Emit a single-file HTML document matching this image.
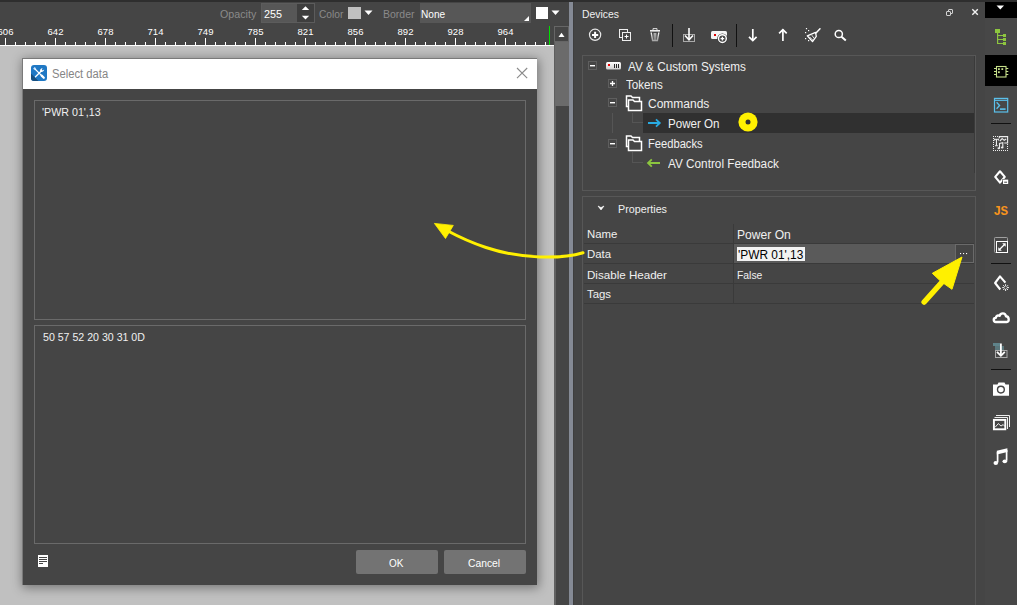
<!DOCTYPE html>
<html><head><meta charset="utf-8">
<style>
*{margin:0;padding:0;box-sizing:border-box}
html,body{width:1017px;height:605px;overflow:hidden;background:#454545;font-family:"Liberation Sans",sans-serif;color:#e8e8e8}
.a{position:absolute}
.t{position:absolute;white-space:pre;line-height:1}
</style></head><body>
<!-- top dark line -->
<div class="a" style="left:0;top:0;width:1017px;height:2px;background:#2e2e2e"></div>

<!-- ===== TOOLBAR ===== -->
<div class="t" style="left:220px;top:9px;font-size:10.7px;color:#8a8a8a">Opacity</div>
<div class="a" style="left:261px;top:3px;width:54px;height:20px;background:#3e3e3e;border:1px solid #5c5c5c"></div>
<div class="a" style="left:262px;top:4px;width:35px;height:18px;background:#575757"></div>
<div class="t" style="left:264px;top:9px;font-size:10.8px;color:#fff">255</div>
<svg class="a" style="left:300px;top:5px" width="12" height="16"><path d="M1.8 5 L5.5 1.2 L9.2 5Z M1.8 10.8 L5.5 14.6 L9.2 10.8Z" fill="#fff"/></svg>
<div class="t" style="left:319px;top:10px;font-size:10.2px;color:#8a8a8a">Color</div>
<div class="a" style="left:348px;top:7px;width:13px;height:12px;background:#c0c0c0"></div>
<svg class="a" style="left:364px;top:10px" width="10" height="6"><path d="M0.5 0.5 L8.5 0.5 L4.5 5Z" fill="#fff"/></svg>
<div class="t" style="left:383px;top:9px;font-size:10.5px;color:#8a8a8a">Border</div>
<div class="a" style="left:420px;top:3px;width:111px;height:20px;background:#575757"></div>
<svg class="a" style="left:523px;top:16px" width="7" height="6"><path d="M6 0 L6 5 L1 5Z" fill="#fff"/></svg>
<div class="t" style="left:421px;top:10px;font-size:10.1px;color:#fff">None</div>
<div class="a" style="left:536px;top:7px;width:12px;height:12px;background:#fff"></div>
<svg class="a" style="left:551px;top:10px" width="10" height="6"><path d="M0.5 0.5 L8.5 0.5 L4.5 5Z" fill="#fff"/></svg>

<!-- ===== RULER ===== -->
<div id="ruler" class="a" style="left:0;top:26px;width:554px;height:20px;background:#454545"></div>
<svg class="a" style="left:0;top:26px" width="554" height="20"><rect x="5" y="12" width="1" height="7" fill="#fff"/><rect x="15" y="16" width="1" height="3" fill="#fff"/><rect x="25" y="16" width="1" height="3" fill="#fff"/><rect x="35" y="16" width="1" height="3" fill="#fff"/><rect x="45" y="16" width="1" height="3" fill="#fff"/><rect x="55" y="12" width="1" height="7" fill="#fff"/><rect x="65" y="16" width="1" height="3" fill="#fff"/><rect x="75" y="16" width="1" height="3" fill="#fff"/><rect x="85" y="16" width="1" height="3" fill="#fff"/><rect x="95" y="16" width="1" height="3" fill="#fff"/><rect x="105" y="12" width="1" height="7" fill="#fff"/><rect x="115" y="16" width="1" height="3" fill="#fff"/><rect x="125" y="16" width="1" height="3" fill="#fff"/><rect x="135" y="16" width="1" height="3" fill="#fff"/><rect x="145" y="16" width="1" height="3" fill="#fff"/><rect x="155" y="12" width="1" height="7" fill="#fff"/><rect x="165" y="16" width="1" height="3" fill="#fff"/><rect x="175" y="16" width="1" height="3" fill="#fff"/><rect x="185" y="16" width="1" height="3" fill="#fff"/><rect x="195" y="16" width="1" height="3" fill="#fff"/><rect x="205" y="12" width="1" height="7" fill="#fff"/><rect x="215" y="16" width="1" height="3" fill="#fff"/><rect x="225" y="16" width="1" height="3" fill="#fff"/><rect x="235" y="16" width="1" height="3" fill="#fff"/><rect x="245" y="16" width="1" height="3" fill="#fff"/><rect x="255" y="12" width="1" height="7" fill="#fff"/><rect x="265" y="16" width="1" height="3" fill="#fff"/><rect x="275" y="16" width="1" height="3" fill="#fff"/><rect x="285" y="16" width="1" height="3" fill="#fff"/><rect x="295" y="16" width="1" height="3" fill="#fff"/><rect x="305" y="12" width="1" height="7" fill="#fff"/><rect x="315" y="16" width="1" height="3" fill="#fff"/><rect x="325" y="16" width="1" height="3" fill="#fff"/><rect x="335" y="16" width="1" height="3" fill="#fff"/><rect x="345" y="16" width="1" height="3" fill="#fff"/><rect x="355" y="12" width="1" height="7" fill="#fff"/><rect x="365" y="16" width="1" height="3" fill="#fff"/><rect x="375" y="16" width="1" height="3" fill="#fff"/><rect x="385" y="16" width="1" height="3" fill="#fff"/><rect x="395" y="16" width="1" height="3" fill="#fff"/><rect x="405" y="12" width="1" height="7" fill="#fff"/><rect x="415" y="16" width="1" height="3" fill="#fff"/><rect x="425" y="16" width="1" height="3" fill="#fff"/><rect x="435" y="16" width="1" height="3" fill="#fff"/><rect x="445" y="16" width="1" height="3" fill="#fff"/><rect x="455" y="12" width="1" height="7" fill="#fff"/><rect x="465" y="16" width="1" height="3" fill="#fff"/><rect x="475" y="16" width="1" height="3" fill="#fff"/><rect x="485" y="16" width="1" height="3" fill="#fff"/><rect x="495" y="16" width="1" height="3" fill="#fff"/><rect x="505" y="12" width="1" height="7" fill="#fff"/><rect x="515" y="16" width="1" height="3" fill="#fff"/><rect x="525" y="16" width="1" height="3" fill="#fff"/><rect x="535" y="16" width="1" height="3" fill="#fff"/><rect x="545" y="16" width="1" height="3" fill="#fff"/><g font-family="Liberation Sans" font-size="9.5" fill="#fff"><text x="5.5" y="9" text-anchor="middle">606</text><text x="55.5" y="9" text-anchor="middle">642</text><text x="105.5" y="9" text-anchor="middle">678</text><text x="155.5" y="9" text-anchor="middle">714</text><text x="205.5" y="9" text-anchor="middle">749</text><text x="255.5" y="9" text-anchor="middle">785</text><text x="305.5" y="9" text-anchor="middle">821</text><text x="355.5" y="9" text-anchor="middle">856</text><text x="405.5" y="9" text-anchor="middle">892</text><text x="455.5" y="9" text-anchor="middle">928</text><text x="505.5" y="9" text-anchor="middle">964</text></g></svg>
<div class="a" style="left:0;top:45px;width:554px;height:1px;background:#fff"></div>
<div class="a" style="left:549px;top:26px;width:1px;height:19px;background:#00e000"></div>

<!-- ===== CANVAS ===== -->
<div class="a" style="left:0;top:46px;width:554px;height:559px;background:#c0c0c0;overflow:hidden">
  <div class="a" style="left:22px;top:12px;width:515px;height:527px;box-shadow:1px 2px 10px 1px rgba(0,0,0,0.38)"></div>
</div>

<!-- ===== DIALOG ===== -->
<div class="a" style="left:22px;top:58px;width:515px;height:527px;background:#454545;border:1px solid #7a7a7a;border-bottom:none;border-right:none"></div>
<div class="a" style="left:23px;top:59px;width:514px;height:30px;background:#fff"></div>
<svg class="a" style="left:31px;top:65px" width="16" height="16" viewBox="0 0 16 16">
  <defs><clipPath id="ic"><rect x="0" y="0" width="16" height="16" rx="3"/></clipPath></defs>
  <g clip-path="url(#ic)">
  <rect x="0" y="0" width="16" height="16" fill="#1f78c4"/>
  <path d="M0 8.5 L7.5 16 L0 16Z" fill="#174f80"/>
  </g>
  <path d="M4 4 L11.5 11.5" stroke="#fff" stroke-width="1.1"/>
  <path d="M3 2.8 L4.2 4.2" stroke="#cfe6ff" stroke-width="2.2"/>
  <path d="M10.6 10.6 L12.8 12.8" stroke="#fff" stroke-width="2.2" stroke-linecap="round"/>
  <path d="M4.5 11.8 L10 6.3" stroke="#fff" stroke-width="1.3" stroke-linecap="round"/>
  <path d="M9.3 6.8 C8.6 5.2 9.6 3.2 11.6 3 L10.8 4.6 L11.6 5.4 L13.2 4.6 C13 6.6 11 7.5 9.3 6.8Z" fill="#fff"/>
</svg>
<div class="t" style="left:52px;top:68px;font-size:12px;color:#858585;transform:scaleX(0.935);transform-origin:0 0">Select data</div>
<svg class="a" style="left:516px;top:67px" width="12" height="12"><path d="M1 1 L11.2 11.2 M11.2 1 L1 11.2" stroke="#8a8a8a" stroke-width="1.1"/></svg>

<div class="a" style="left:34px;top:100px;width:492px;height:220px;border:1px solid #6a6a6a"></div>
<div class="t" style="left:42px;top:107px;font-size:10.7px;color:#f0f0f0">'PWR 01',13</div>
<div class="a" style="left:34px;top:325px;width:492px;height:219px;border:1px solid #6a6a6a"></div>
<div class="t" style="left:43px;top:332px;font-size:10.6px;color:#f0f0f0">50 57 52 20 30 31 0D</div>

<svg class="a" style="left:38px;top:555px" width="10" height="12"><rect x="0" y="0" width="10" height="12" fill="#fff"/><rect x="1" y="2" width="8" height="1" fill="#454545"/><rect x="1" y="4" width="8" height="1" fill="#454545"/><rect x="1" y="6" width="8" height="1" fill="#454545"/><rect x="1" y="8" width="4" height="1" fill="#454545"/></svg>
<div class="a" style="left:356px;top:550px;width:82px;height:24px;background:#737373;border-radius:2px"></div>
<div class="t" style="left:389px;top:559px;font-size:10px;color:#fff">OK</div>
<div class="a" style="left:444px;top:550px;width:82px;height:24px;background:#737373;border-radius:2px"></div>
<div class="t" style="left:468px;top:559px;font-size:10.3px;color:#fff">Cancel</div>

<!-- ===== SCROLLBAR ===== -->
<div class="a" style="left:554px;top:26px;width:15px;height:579px;background:#454545;border-left:2px solid #616161"></div>
<div class="a" style="left:554px;top:26px;width:15px;height:16px;border:1px solid #666;background:#454545"></div>
<svg class="a" style="left:558px;top:32px" width="8" height="6"><path d="M0.5 5 L3.5 0.8 L6.5 5Z" fill="#fff"/></svg>
<div class="a" style="left:554px;top:42px;width:15px;height:64px;background:#6b6b6b;border-left:1px solid #5e5e5e"></div>
<!-- splitter -->
<div class="a" style="left:569px;top:2px;width:4px;height:603px;background:#858a95"></div>
<div class="a" style="left:573px;top:2px;width:1px;height:603px;background:#3e3e3e"></div>

<!-- ===== DEVICES PANEL ===== -->
<div class="t" style="left:582px;top:9px;font-size:10.6px;color:#f0f0f0;transform:scaleX(0.98);transform-origin:0 0">Devices</div>
<svg class="a" style="left:946px;top:9px" width="7" height="7" viewBox="0 0 7 7"><rect x="2.5" y="0.5" width="4" height="4" rx="0.5" fill="none" stroke="#d0d0d0" stroke-width="1"/><rect x="0.5" y="2.5" width="4" height="4" rx="0.5" fill="#454545" stroke="#d0d0d0" stroke-width="1"/></svg>
<svg class="a" style="left:971px;top:8px" width="8" height="8" viewBox="0 0 8 8"><path d="M1.3 1.3 L6.8 6.8 M6.8 1.3 L1.3 6.8" stroke="#f2f2f2" stroke-width="1.4"/></svg>

<!-- toolbar -->
<svg class="a" style="left:580px;top:22px" width="280" height="28" viewBox="580 22 280 28">
  <circle cx="595.1" cy="34.8" r="5.6" fill="none" stroke="#e8e8e8" stroke-width="1.2"/>
  <path d="M592 34.9 H598.2 M595.1 31.8 V38" stroke="#fff" stroke-width="2"/>
  <rect x="619.5" y="29.5" width="8" height="8" fill="none" stroke="#eee" stroke-width="1"/>
  <rect x="622.5" y="32.5" width="8" height="8" fill="#454545" stroke="#eee" stroke-width="1"/>
  <path d="M624.5 36.5 H628.5 M626.5 34.5 V38.5" stroke="#fff" stroke-width="1"/>
  <defs><linearGradient id="tg" gradientUnits="userSpaceOnUse" x1="0" y1="32" x2="0" y2="41"><stop offset="0" stop-color="#fff"/><stop offset="1" stop-color="#999"/></linearGradient></defs>
  <path d="M653 30 V28.6 H657 V30" fill="none" stroke="#ddd" stroke-width="1"/>
  <rect x="650" y="30" width="10" height="1.6" fill="#eee"/>
  <path d="M651.2 32.5 L652.6 40.5 H657.4 L658.8 32.5" fill="none" stroke="url(#tg)" stroke-width="1.4"/>
  <path d="M654.2 33 V40 M655.8 33 V40" stroke="url(#tg)" stroke-width="0.9"/>
  <path d="M652.3 40.6 H657.7" stroke="#aaa" stroke-width="1"/>
  <rect x="672" y="24" width="1" height="23" fill="#111"/>
  <rect x="683.5" y="34.5" width="11" height="7" fill="none" stroke="#aaa" stroke-width="1"/>
  <path d="M689 28 V39.5" stroke="#fff" stroke-width="1.6"/>
  <path d="M685 35.5 L689 39.8 L693 35.5" fill="none" stroke="#fff" stroke-width="1.6"/>
  <rect x="711" y="31" width="16" height="8" rx="1.5" fill="#f4f4f4"/>
  <rect x="714" y="34" width="2" height="2" fill="#d00"/>
  <circle cx="722.4" cy="38.6" r="5.2" fill="#3a3a3a"/><circle cx="722.4" cy="38.6" r="3.9" fill="#454545" stroke="#fff" stroke-width="1.4"/>
  <path d="M720.6 38.6 H724.2 M722.4 36.8 V40.4" stroke="#fff" stroke-width="1.3"/>
  <rect x="736" y="24" width="1" height="23" fill="#111"/>
  <path d="M752.8 29 V40.5" stroke="#fff" stroke-width="1.7"/>
  <path d="M749 36.8 L752.8 40.6 L756.6 36.8" fill="none" stroke="#fff" stroke-width="1.7"/>
  <path d="M782.9 29.6 V41" stroke="#fff" stroke-width="1.7"/>
  <path d="M779.1 33.4 L782.9 29.6 L786.7 33.4" fill="none" stroke="#fff" stroke-width="1.7"/>
  <path d="M820 28.8 L816 33" stroke="#fff" stroke-width="1.5" stroke-linecap="round"/>
  <path d="M815.5 32.4 L807.3 35.8 L812.5 41.6 L816.3 36.3Z" fill="none" stroke="#fff" stroke-width="1.3" stroke-linejoin="round"/>
  <path d="M809.5 36.8 L813 40.3 M811.8 35.2 L814.3 38.6" stroke="#fff" stroke-width="0.8"/>
  <rect x="805.9" y="28" width="1.2" height="1.2" fill="#fff"/><rect x="808" y="30" width="1.2" height="1.2" fill="#fff"/><rect x="805" y="32" width="1.2" height="1.2" fill="#fff"/><rect x="805" y="38" width="1.2" height="1.2" fill="#fff"/><rect x="808" y="40" width="1.2" height="1.2" fill="#fff"/>
  <circle cx="838.8" cy="34" r="3.6" fill="none" stroke="#fff" stroke-width="1.5"/>
  <path d="M841.5 36.8 L845.8 40.5" stroke="#fff" stroke-width="2"/>
</svg>

<!-- tree box -->
<div class="a" style="left:582px;top:55px;width:394px;height:136px;border:1px solid #575757"></div>
<div class="a" style="left:643px;top:113px;width:331px;height:20px;background:#303030"></div>
<div class="a" style="left:974px;top:56px;width:1px;height:117px;background:#3a3a3a"></div>
<svg class="a" style="left:583px;top:56px" width="100" height="130" viewBox="583 56 100 130">
  <rect x="588.5" y="61.5" width="8" height="8" fill="none" stroke="#5e5e5e"/>
  <rect x="590" y="65" width="5" height="1.4" fill="#fff"/>
  <rect x="608.5" y="79.5" width="8" height="8" fill="none" stroke="#5e5e5e"/>
  <path d="M610 83.5 H615 M612.5 81 V86" stroke="#fff" stroke-width="1.3"/>
  <rect x="608.5" y="98.5" width="8" height="8" fill="none" stroke="#5e5e5e"/>
  <rect x="610" y="102" width="5" height="1.4" fill="#fff"/>
  <rect x="608.5" y="139.5" width="8" height="8" fill="none" stroke="#5e5e5e"/>
  <rect x="610" y="143" width="5" height="1.4" fill="#fff"/>
  <defs><linearGradient id="dg" x1="0" y1="0" x2="0" y2="1"><stop offset="0" stop-color="#fff"/><stop offset="1" stop-color="#cfcfcf"/></linearGradient></defs>
  <rect x="606" y="62" width="15" height="7.5" rx="1.5" fill="url(#dg)"/>
  <rect x="608" y="64" width="2" height="2" fill="#e00"/>
  <path d="M614.5 64 V68 M616.5 64 V68 M618.5 64 V68" stroke="#111" stroke-width="0.9"/>
  <!-- folders -->
  <g id="fold1" fill="#454545" stroke="#fff" stroke-width="1.5">
    <path d="M626.5 96 H631 L632.5 97.5 H639.5 V106.5 H626.5Z"/>
    <path d="M628.5 100 H633 L634.5 101.5 H641.5 V110.5 H628.5Z"/>
  </g>
  <g fill="#454545" stroke="#fff" stroke-width="1.5">
    <path d="M626.5 136 H631 L632.5 137.5 H639.5 V146.5 H626.5Z"/>
    <path d="M628.5 140 H633 L634.5 141.5 H641.5 V150.5 H628.5Z"/>
  </g>
  <!-- tree lines -->
  <rect x="612" y="113" width="1" height="20" fill="#555"/>
  <rect x="632" y="113" width="1" height="10" fill="#555"/>
  <rect x="632" y="122" width="11" height="1" fill="#555"/>
  <rect x="632" y="152" width="1" height="11" fill="#555"/>
  <rect x="632" y="162" width="11" height="1" fill="#555"/>
  <!-- arrows -->
  <path d="M648 123 H659" stroke="#29abe2" stroke-width="2"/>
  <path d="M656 119.3 L659.8 123 L656 126.7" fill="none" stroke="#29abe2" stroke-width="1.8"/>
  <path d="M648.5 163 H660" stroke="#8cc63f" stroke-width="2"/>
  <path d="M651.8 159.3 L648 163 L651.8 166.7" fill="none" stroke="#8cc63f" stroke-width="1.8"/>
</svg>
<div class="t" style="left:628px;top:61px;font-size:12px;color:#f0f0f0;transform:scaleX(0.979);transform-origin:0 0">AV &amp; Custom Systems</div>
<div class="t" style="left:626px;top:79px;font-size:12px;color:#f0f0f0;transform:scaleX(0.97);transform-origin:0 0">Tokens</div>
<div class="t" style="left:648px;top:98px;font-size:12px;color:#f0f0f0">Commands</div>
<div class="t" style="left:668px;top:118px;font-size:12px;color:#f0f0f0;transform:scaleX(0.966);transform-origin:0 0">Power On</div>
<div class="t" style="left:648px;top:138px;font-size:12px;color:#f0f0f0;transform:scaleX(0.93);transform-origin:0 0">Feedbacks</div>
<div class="t" style="left:668px;top:158px;font-size:12px;color:#f0f0f0;transform:scaleX(0.98);transform-origin:0 0">AV Control Feedback</div>
<!-- yellow cursor circle -->
<svg class="a" style="left:737px;top:111px" width="22" height="22"><circle cx="11" cy="11" r="9.6" fill="#fff000"/><circle cx="11" cy="11" r="2.5" fill="#303030"/></svg>

<!-- properties box -->
<div class="a" style="left:582px;top:196px;width:394px;height:420px;border:1px solid #575757"></div>
<svg class="a" style="left:597px;top:205px" width="8" height="6"><path d="M1 1 L4 5 L7 1 L4 2.6Z" fill="#fff" stroke="#fff" stroke-width="0.6" stroke-linejoin="round"/></svg>
<div class="t" style="left:618px;top:204px;font-size:10.75px;color:#f0f0f0">Properties</div>
<div class="a" style="left:733px;top:224px;width:1px;height:80px;background:#3a3a3a"></div>
<div class="a" style="left:584px;top:243px;width:390px;height:1px;background:#3a3a3a"></div>
<div class="a" style="left:584px;top:263px;width:390px;height:1px;background:#3a3a3a"></div>
<div class="a" style="left:584px;top:283px;width:390px;height:1px;background:#3a3a3a"></div>
<div class="a" style="left:584px;top:303px;width:390px;height:1px;background:#3a3a3a"></div>
<div class="a" style="left:734px;top:244px;width:240px;height:19px;background:#5a5a5a"></div>
<div class="a" style="left:737px;top:247px;width:68px;height:14px;background:#f2f2f2"></div>
<div class="a" style="left:955px;top:244px;width:19px;height:19px;background:#454545;border:1px solid #6a6a6a"></div>
<svg class="a" style="left:958px;top:252px" width="12" height="3"><rect x="2" y="1" width="1.1" height="1.1" fill="#fff"/><rect x="5" y="1" width="1.1" height="1.1" fill="#fff"/><rect x="8" y="1" width="1.1" height="1.1" fill="#fff"/></svg>
<div class="t" style="left:587px;top:229px;font-size:11.4px;color:#f0f0f0">Name</div>
<div class="t" style="left:587px;top:249px;font-size:11.4px;color:#f0f0f0">Data</div>
<div class="t" style="left:587px;top:269px;font-size:11.6px;color:#f0f0f0">Disable Header</div>
<div class="t" style="left:587px;top:289px;font-size:11.4px;color:#f0f0f0">Tags</div>
<div class="t" style="left:737px;top:229px;font-size:12.1px;color:#f0f0f0">Power On</div>
<div class="t" style="left:738px;top:249px;font-size:12px;color:#000;transform:scaleX(0.99);transform-origin:0 0">'PWR 01',13</div>
<div class="t" style="left:737px;top:270px;font-size:11.5px;color:#f0f0f0;transform:scaleX(0.9);transform-origin:0 0">False</div>

<!-- ===== RIGHT SIDEBAR ===== -->
<div class="a" style="left:985px;top:2px;width:32px;height:603px;background:#474747"></div>
<div class="a" style="left:985px;top:2px;width:32px;height:16px;background:#000"></div>
<svg class="a" style="left:996px;top:5px" width="9" height="5"><path d="M0.5 0.5 H8 L4.25 4.5Z" fill="#fff"/></svg>
<div class="a" style="left:985px;top:55px;width:32px;height:31px;background:#000"></div>


<svg class="a" style="left:985px;top:20px" width="32" height="460" viewBox="985 20 32 460">
  <!-- tree -->
  <g fill="#8dc63f">
    <rect x="995" y="29" width="5" height="4"/>
    <rect x="997" y="33" width="1.2" height="11"/>
    <rect x="998" y="35" width="5" height="1"/><rect x="998" y="39" width="5" height="1"/><rect x="998" y="43" width="5" height="1"/>
    <rect x="1003" y="34" width="3" height="3"/><rect x="1003" y="38" width="3" height="3"/><rect x="1003" y="42" width="3" height="3"/>
  </g>
  <!-- chip -->
  <g stroke="#c6df8a" fill="none" stroke-width="1.1">
    <rect x="996.5" y="66.5" width="9.5" height="10.5"/>
    <path d="M994 68.5 H996.5 M994 71.5 H996.5 M994 74.5 H996.5 M1006 68.5 H1008.3 M1006 71.5 H1008.3 M1006 74.5 H1008.3"/>
  </g>
  <g fill="#c6df8a"><rect x="998" y="68.2" width="1.8" height="1.8"/><rect x="1001.4" y="68.2" width="1.8" height="1.8"/><rect x="998" y="71.3" width="1.8" height="1.8"/></g>
  <!-- terminal -->
  <g stroke="#5bc0eb" fill="none" stroke-width="1.2">
    <rect x="994.5" y="98.4" width="13.2" height="13.6"/>
    <path d="M994.5 100.3 H1007.7"/>
    <path d="M996.6 102.3 L999.6 105.5 L996.6 108.8" stroke-width="1.3"/>
  </g>
  <rect x="1000" y="108.3" width="5.6" height="1.6" fill="#5bc0eb"/>
  <!-- separators -->
  <rect x="991" y="123" width="20" height="1" fill="#111"/>
  <rect x="991" y="263" width="20" height="1" fill="#111"/>
  <rect x="991" y="369" width="20" height="1" fill="#111"/>
  <!-- T music -->
  <g fill="#eee">
    <rect x="993" y="136" width="1" height="1"/><rect x="995" y="136" width="1" height="1"/><rect x="997" y="136" width="1" height="1"/>
    <rect x="993" y="138" width="1" height="1"/><rect x="993" y="140" width="1" height="1"/><rect x="993" y="142" width="1" height="1"/><rect x="993" y="144" width="1" height="1"/><rect x="993" y="146" width="1" height="1"/><rect x="993" y="148" width="1" height="1"/><rect x="993" y="150" width="1" height="1"/>
    <rect x="995" y="150" width="1" height="1"/><rect x="997" y="150" width="1" height="1"/><rect x="999" y="150" width="1" height="1"/><rect x="1001" y="150" width="1" height="1"/><rect x="1003" y="150" width="1" height="1"/><rect x="1005" y="150" width="1" height="1"/><rect x="1007" y="150" width="1" height="1"/>
    <rect x="1007" y="144" width="1" height="1"/><rect x="1007" y="146" width="1" height="1"/><rect x="1007" y="148" width="1" height="1"/>
    <rect x="994.2" y="138.8" width="4.6" height="1"/><rect x="994.2" y="138.8" width="0.8" height="1.8"/><rect x="998" y="138.8" width="0.8" height="1.8"/><rect x="995.9" y="139" width="1.1" height="6.4"/><rect x="995" y="145.2" width="2.8" height="1"/>
  </g>
  <path d="M999.3 138.2 V136.6 H1007.6 V143 H1004.3" fill="none" stroke="#eee" stroke-width="1.1"/>
  <path d="M999.8 141 L1002.2 138.6 L1004.2 140.3 L1006.2 139" fill="none" stroke="#eee" stroke-width="1.1"/>
  <path d="M999.5 148 V143.5 L1002.8 142.8 V147.2" fill="none" stroke="#eee" stroke-width="1.1"/>
  <ellipse cx="998.8" cy="148.3" rx="1.3" ry="1" fill="#eee"/><ellipse cx="1002.2" cy="147.5" rx="1.3" ry="1" fill="#eee"/>
  <!-- eraser minus -->
  <path d="M1000 171.3 L1004.8 176.9 L1000 182.7 L995.2 176.9Z" fill="none" stroke="#fff" stroke-width="2.1" stroke-linejoin="round"/>
  <rect x="1002.4" y="179" width="6.3" height="5.5" fill="#454545"/>
  <rect x="1003" y="179.6" width="5.2" height="4.4" fill="#fff"/>
  <rect x="1004.2" y="181.7" width="2.8" height="1" fill="#454545"/>
  <!-- JS -->
  <text x="993.6" y="215.4" font-family="Liberation Mono" font-weight="bold" font-size="12.6" fill="#f7941d" letter-spacing="-0.6">JS</text>
  <!-- expand -->
  <rect x="994.5" y="237.5" width="13" height="15" rx="0.8" fill="none" stroke="#a0a0a0" stroke-width="1"/>
  <rect x="996.5" y="241.5" width="11" height="11" fill="#454545" stroke="#fff" stroke-width="1"/>
  <path d="M999.5 249.5 L1004.5 244.5" stroke="#fff" stroke-width="1.2"/>
  <path d="M998.3 247.2 V250.7 H1001.8Z M1002.2 243.3 H1005.7 V246.8Z" fill="#fff"/>
  <!-- eraser gear -->
  <path d="M1005.4 282.6 L1000 276.4 L995.1 283 L1000.3 289.5" fill="none" stroke="#fff" stroke-width="2.1" stroke-linejoin="round"/>
  <g stroke="#fff" stroke-width="0.9">
    <path d="M1005.6 284.2 V291 M1002.2 287.6 H1009 M1003.2 285.2 L1008 290 M1008 285.2 L1003.2 290"/>
  </g>
  <circle cx="1005.6" cy="287.6" r="1.3" fill="#454545"/>
  <!-- cloud -->
  <path d="M995.8 322 C993.2 322 993 318.2 995.8 317.8 C996.2 315.6 998.3 315 999.6 315.8 C1000.6 312.6 1005.3 312.4 1006 316.2 C1009.3 316.4 1009.6 322 1006.8 322 Z" fill="none" stroke="#fff" stroke-width="2.4" stroke-linejoin="round"/>
  <!-- download teal -->
  <rect x="993" y="343" width="7" height="3" fill="#6a9ca6" opacity="0.7"/>
  <rect x="995" y="346" width="9" height="4" fill="#6a9ca6" opacity="0.55"/>
  <rect x="995.5" y="350.5" width="11.5" height="7" fill="none" stroke="#aaa" stroke-width="1"/>
  <path d="M1000.9 343.5 V355.5" stroke="#fff" stroke-width="1.8"/>
  <path d="M997 351.8 L1000.9 355.8 L1004.8 351.8" fill="none" stroke="#fff" stroke-width="1.8"/>
  <!-- camera -->
  <path d="M993 384.5 H997.5 L998.5 382.5 H1004.5 L1005.5 384.5 H1009 V395.7 H993Z" fill="#fff"/>
  <circle cx="1000.9" cy="389.6" r="3.4" fill="none" stroke="#454545" stroke-width="1.4"/>
  <!-- gallery -->
  <path d="M996 415.5 H1009.5 V427" fill="none" stroke="#eee" stroke-width="1"/>
  <path d="M994.5 417.5 H1007.5 V429" fill="none" stroke="#eee" stroke-width="1"/>
  <rect x="993.9" y="419.9" width="11.4" height="9.4" fill="#454545" stroke="#fff" stroke-width="1.9"/>
  <path d="M995.2 427.2 L998.3 423.6 L1001 426 L1003.2 424.6 L1005 426.5" fill="none" stroke="#fff" stroke-width="0.9"/>
  <!-- music -->
  <path d="M997.6 452 V462.5 M1006.6 450 V460.8" fill="none" stroke="#fff" stroke-width="1.7"/>
  <path d="M996.8 450.8 L1007.4 448.3 V452 L996.8 454.5Z" fill="#fff"/>
  <ellipse cx="995.8" cy="463" rx="2.3" ry="1.9" fill="#fff"/>
  <ellipse cx="1004.8" cy="461.3" rx="2.3" ry="1.9" fill="#fff"/>
</svg>

<!-- ===== YELLOW ANNOTATION ARROWS ===== -->
<svg class="a" style="left:0;top:0" width="1017" height="605">
  <path d="M583 252.7 C562 259 522 259.5 486 247.5 C471 242.5 459 237 447 230.5" fill="none" stroke="#fff000" stroke-width="3" stroke-linecap="round"/>
  <path d="M434.4 223.4 L453.3 225.4 L445.5 238.5Z" fill="#fff000" stroke="#fff000" stroke-width="0.8" stroke-linejoin="round"/>
  <path d="M924.2 302 L943 281" fill="none" stroke="#fff000" stroke-width="5.6" stroke-linecap="round"/>
  <path d="M962 257 L932.3 273.3 L941 281.5 L952 289.3Z" fill="#fff000" stroke="#fff000" stroke-width="1" stroke-linejoin="round"/>
</svg>

</body></html>
